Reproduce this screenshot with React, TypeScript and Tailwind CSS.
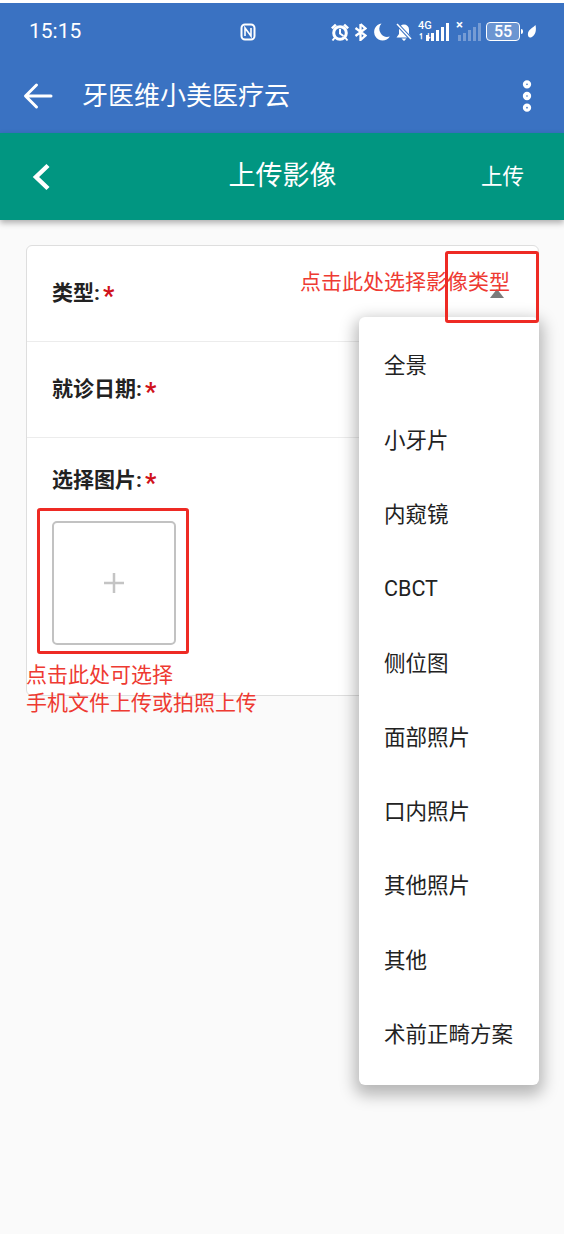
import { MoreVertical } from "lucide-react";

const menuItems = ["全景", "小牙片", "内窥镜", "CBCT", "侧位图", "面部照片", "口内照片", "其他照片", "其他", "术前正畸方案"];

const font = "font-['Roboto','Noto_Sans_CJK_SC',sans-serif]";

function SignalBars() {
  return (
    <div className="absolute bottom-0 right-0 flex items-end gap-[2px]">
      <div className="h-[6px] w-[3px] bg-white" />
      <div className="h-[8px] w-[3px] bg-white" />
      <div className="h-[11px] w-[3px] bg-white" />
      <div className="h-[14px] w-[3px] bg-white" />
      <div className="h-[18px] w-[3px] bg-white" />
    </div>
  );
}

function StatusIcons() {
  return (
    <div className="ml-auto flex items-center text-white">
      {/* alarm */}
      <svg width="20" height="20" viewBox="0 0 20 20">
        <circle cx="10" cy="11" r="6.300" fill="none" stroke="#fff" strokeWidth="3" />
        <path d="M10 7v4.500l3.500 2.500" fill="none" stroke="#fff" strokeWidth="2" />
        <path d="M1 5.500 5 1.800 6.800 3.400 2.800 7.200zM19 5.500 15 1.800 13.200 3.400 17.200 7.200z" fill="#fff" />
        <path d="M4.500 16l-2 2.500M15.500 16l2 2.500" stroke="#fff" strokeWidth="2" />
      </svg>
      {/* bluetooth with dnd */}
      <svg width="13" height="18" viewBox="0 0 13 18" className="ml-[4px]">
        <path d="M6.500 1v16l5-4.500L1.500 5M6.500 1l5 4.500L1.500 13" fill="none" stroke="#fff" strokeWidth="2.300" />
      </svg>
      {/* moon */}
      <svg width="18" height="18" viewBox="0 0 18 18" className="ml-[5px]">
        <path d="M9.500 0.500A8.500 8.500 0 1 0 17.800 13.500 8 8 0 0 1 9.500 0.500z" fill="#fff" />
      </svg>
      {/* muted bell */}
      <svg width="18" height="18" viewBox="0 0 18 18" className="ml-[5px]">
        <path d="M9 1.500a5 5 0 0 0-5 5v4.500l-2.500 3.500h15L14 11V6.500a5 5 0 0 0-5-5zM6.500 15.500h5L9 18z" fill="#fff" />
        <path d="M2 1l14 15" stroke="#3a72c2" strokeWidth="3.500" />
        <path d="M2 1l14 15" stroke="#fff" strokeWidth="1.500" />
      </svg>
      {/* 4G signal */}
      <div className="relative ml-[5px] h-[18px] w-[31px]">
        <span className="absolute left-0 top-[-3px] text-[11px] leading-[12px] font-medium">4G</span>
        <span className="absolute left-0 top-[10px] text-[8px] leading-[8px] font-bold">↿⇂</span>
        <SignalBars />
      </div>
      {/* second sim */}
      <div className="relative ml-[7px] h-[18px] w-[25px]">
        <span className="absolute left-0 top-[-4px] text-[13px] leading-[12px] font-bold">×</span>
        <div className="opacity-30">
          <SignalBars />
        </div>
      </div>
      {/* battery */}
      <div className="ml-[5px] flex h-[19px] w-[34px] items-center justify-center rounded-[4px] border-[1.500px] border-white bg-white/25 text-[16px] font-medium leading-none">
        55
      </div>
      <div className="ml-[1px] h-[5px] w-[2px] rounded-r-sm bg-white" />
      {/* leaf */}
      <svg width="10" height="15" viewBox="0 0 10 14" className="ml-[4px]">
        <path d="M8.500 0.500C9.500 5 9 11 4 13 1.500 13.500 0.500 11 1 8.500 1.500 5.500 6 3 8.500 0.500z" fill="#fff" />
      </svg>
    </div>
  );
}

function FormRow({ label }: { label: string }) {
  return (
    <div className="flex h-[28px] items-center text-[21px] font-bold leading-[28px] text-[#222]">
      {label}:<span className="ml-[3px] mt-[6px] text-[25px] leading-none text-[#d0121b]">*</span>
    </div>
  );
}

export default function App() {
  return (
    <div className={`${font} relative h-[1234px] w-[564px] overflow-hidden bg-[#fafafa]`}>
      <div className="h-[3px] bg-white" />

      {/* 状态栏 + 标题栏 */}
      <div className="h-[130px] bg-[#3a72c2] pl-px">
        <div className="flex h-[55px] items-center pl-[28px] pr-[27px] pt-[2px] text-white">
          <span className="w-[60px] text-[21px] leading-none">15:15</span>
          <svg width="18" height="18" viewBox="0 0 18 18" className="ml-[150px]">
            <rect x="2.500" y="1.500" width="13" height="15" rx="3.500" fill="none" stroke="#fff" strokeWidth="2" />
            <path d="M6 13V5l6 8V5" fill="none" stroke="#fff" strokeWidth="1.600" />
          </svg>
          <StatusIcons />
        </div>
        <div className="flex h-[75px] items-center">
          <svg width="30" height="28" viewBox="0 0 30 28" className="ml-[22px]" fill="none" stroke="#fff" strokeWidth="3" strokeLinecap="round" strokeLinejoin="round">
            <path d="M28 14H3M13.500 3 2.500 14l11 11" />
          </svg>
          <span className="ml-[29px] text-[26px] leading-none text-white">牙医维小美医疗云</span>
          <MoreVertical className="ml-auto mr-[17px] text-white" size={40} strokeWidth={3} />
        </div>
      </div>

      {/* 上传影像 */}
      <div className="relative flex h-[87px] items-center justify-center bg-[#019681] pl-px shadow-[0_3px_6px_rgba(0,0,0,0.3)]">
        <svg width="20" height="28" viewBox="0 0 20 28" className="absolute left-[31px] top-[30px]" fill="none" stroke="#fff" strokeWidth="4.500">
          <path d="M17 2.500 5 14l12 11.500" />
        </svg>
        <span className="text-[27px] leading-none text-white">上传影像</span>
        <span className="absolute left-[481px] top-[30px] text-[21.500px] leading-[28px] text-white">上传</span>
      </div>

      {/* 表单卡片 */}
      <div className="ml-[26px] mt-[25px] h-[451px] w-[513px] rounded-[6px] border border-[#dedede] bg-white">
        <div className="h-[96px] border-b border-[#ececec] pl-[25px] pt-[33px]">
          <FormRow label="类型" />
        </div>
        <div className="h-[96px] border-b border-[#ececec] pl-[25px] pt-[33px]">
          <FormRow label="就诊日期" />
        </div>
        <div className="pl-[25px] pt-[28px]">
          <FormRow label="选择图片" />
          <div className="mt-[27px] flex h-[124px] w-[124px] items-center justify-center rounded-[5px] border-2 border-[#c2c2c2]">
            <svg width="20" height="20" viewBox="0 0 20 20">
              <path d="M10 0v20M0 10h20" stroke="#c4c4c4" strokeWidth="2.500" />
            </svg>
          </div>
        </div>
      </div>

      {/* 下拉三角 */}
      <div className="absolute left-[490px] top-[289px] h-0 w-0 border-x-[7px] border-b-[9px] border-x-transparent border-b-[#7b7b7b]" />

      {/* 下拉菜单 */}
      <div className="absolute left-[359px] top-[317px] h-[768px] w-[180px] rounded-[6px] bg-white pt-[12px] pl-[25px] shadow-[0_6px_16px_4px_rgba(0,0,0,0.28)]">
        {menuItems.map((item) => (
          <div key={item} className="flex h-[74.300px] items-center whitespace-nowrap text-[21.500px] leading-none text-[#222]">
            {item}
          </div>
        ))}
      </div>

      {/* 红色标注 */}
      <div className="absolute left-[445px] top-[251px] h-[72px] w-[94px] rounded-[3px] border-[3px] border-[#ee2a24]" />
      <div className="absolute left-[300px] top-[268px] whitespace-nowrap text-[21px] leading-[28px] text-[#ee3a32]">
        点击此处选择影像类型
      </div>
      <div className="absolute left-[37px] top-[508px] h-[146px] w-[152px] rounded-[3px] border-[3px] border-[#ee2a24]" />
      <div className="absolute left-[26px] top-[661px] whitespace-nowrap text-[21px] leading-[28px] text-[#ee3a32]">
        点击此处可选择
        <br />
        手机文件上传或拍照上传
      </div>
    </div>
  );
}
